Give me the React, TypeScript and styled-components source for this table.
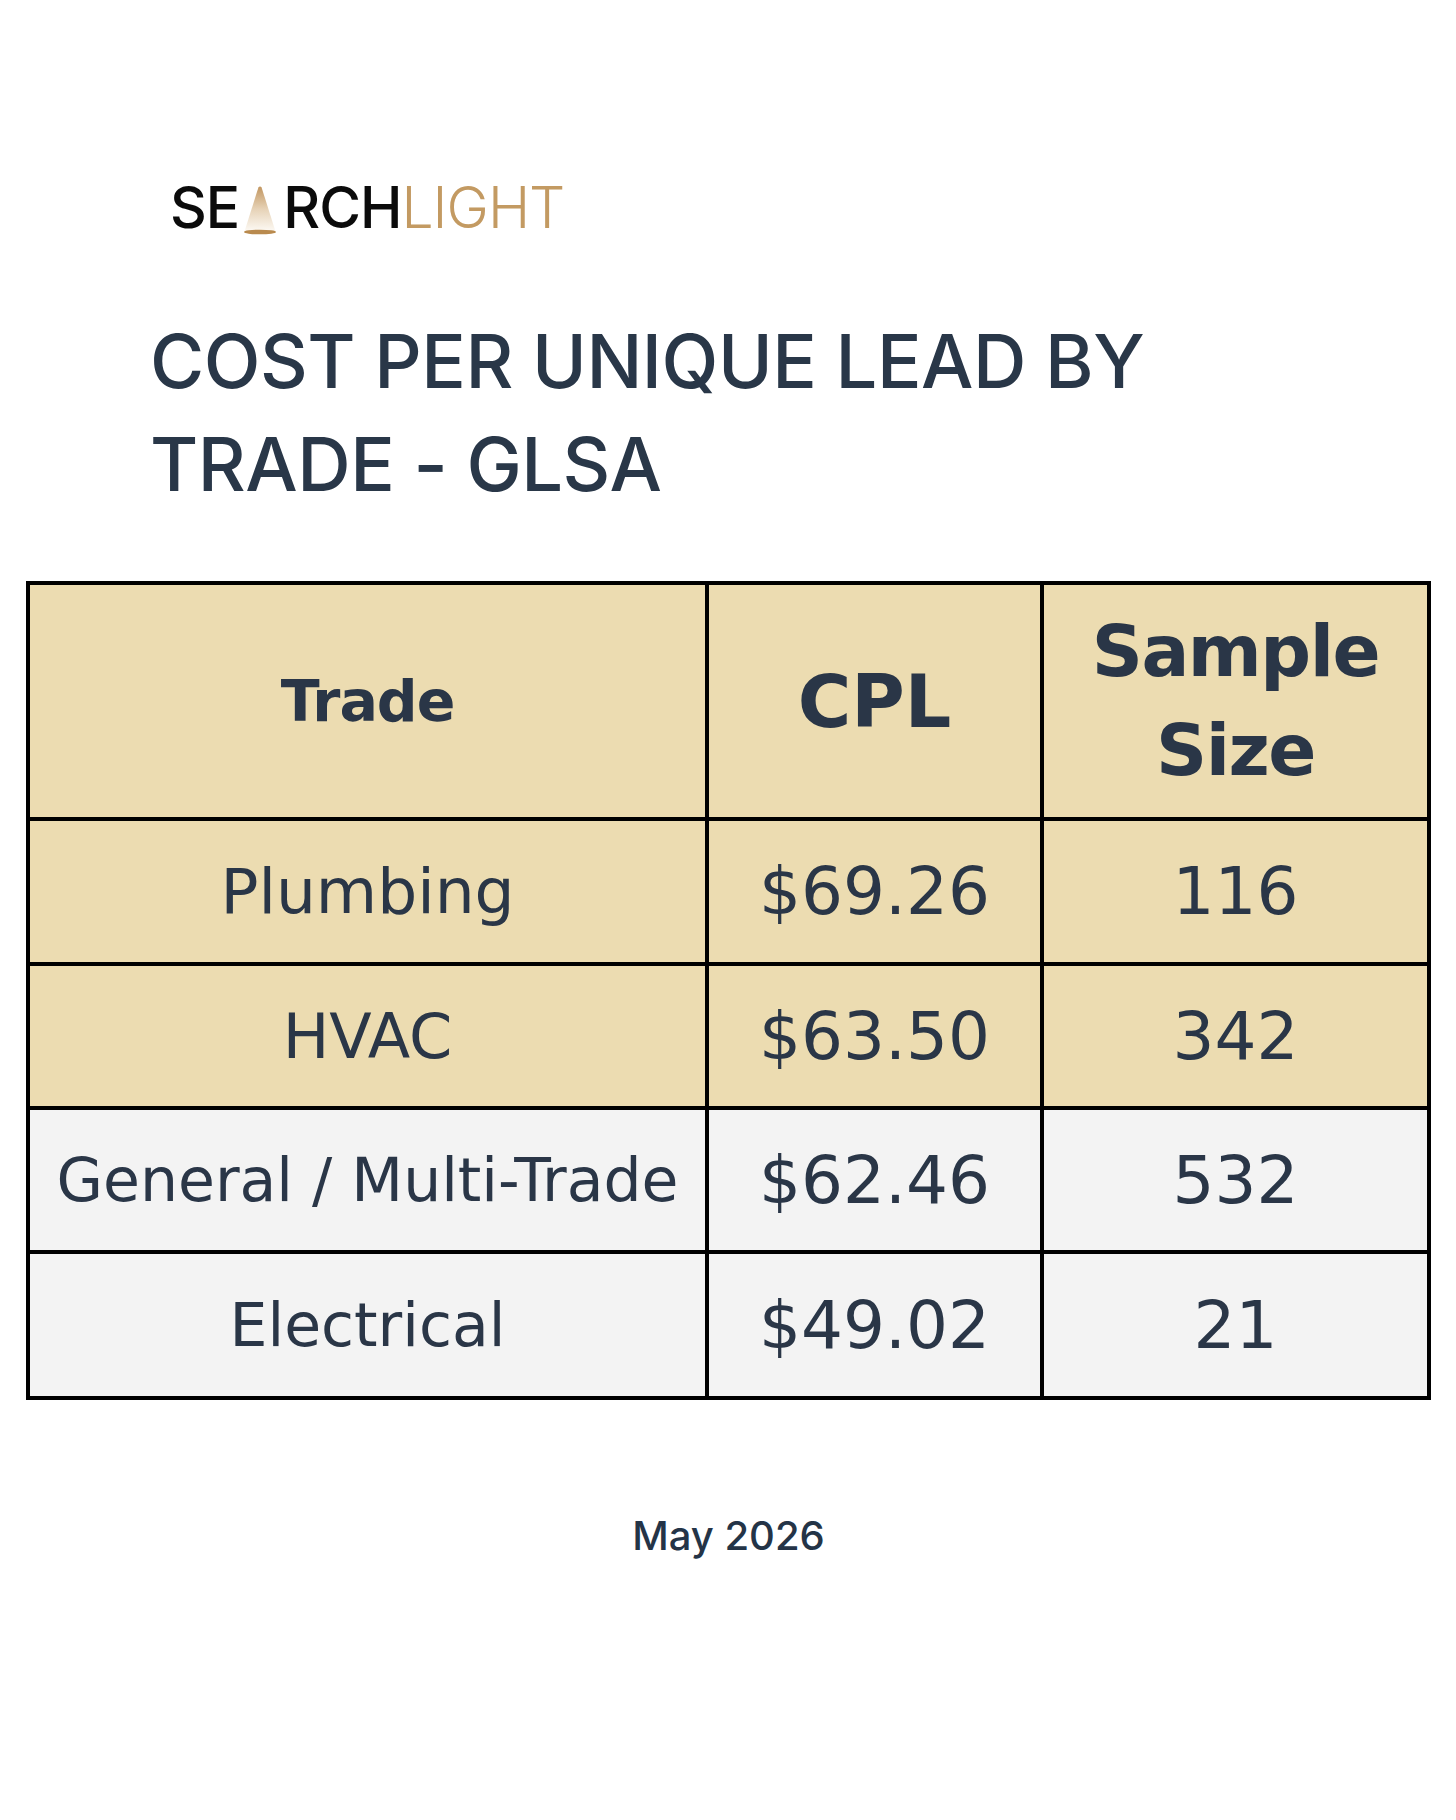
import React from "react";
import styled, { createGlobalStyle } from "styled-components";

const Global = createGlobalStyle`
  html, body { margin: 0; padding: 0; background: #ffffff; }
  body { font-family: Inter, "Liberation Sans", sans-serif; }
`;

const Page = styled.div`
  width: 1456px;
  min-height: 1820px;
  box-sizing: border-box;
  padding: 0 25px 0 26px;
  display: flex;
  flex-direction: column;
`;

const Logo = styled.div`
  margin: 179px 0 0 144px;
  font-family: Inter, "Liberation Sans", sans-serif;
  font-size: 57px;
  line-height: 57px;
  white-space: nowrap;
  display: flex;
  align-items: baseline;
`;

const LogoDark = styled.span`
  color: #0b0b0b;
  font-weight: 500;
  letter-spacing: -1px;
`;

const LogoGold = styled.span`
  color: #c39a62;
  font-weight: 300;
  letter-spacing: -1px;
`;

const Beam = styled.svg`
  width: 34px;
  height: 50px;
  margin: 0 6px 0 4px;
  align-self: flex-end;
  transform: translateY(-1px);
`;

const Title = styled.h1`
  margin: 74px 0 0 124px;
  font-family: Inter, "Liberation Sans", sans-serif;
  font-weight: 500;
  font-size: 74px;
  line-height: 103px;
  color: #293748;
  letter-spacing: -0.5px;
`;

const Grid = styled.div`
  margin-top: 65px;
  display: grid;
  grid-template-columns: 679px 335px 387px;
  grid-template-rows: 236px 145px 144px 144px 146px;
  border-top: 4px solid #000;
  border-left: 4px solid #000;
  width: 1405px;
  box-sizing: border-box;
`;

const Cell = styled.div<{ $bg: string; $size: number; $bold?: boolean; $ls?: number }>`
  box-sizing: border-box;
  border-right: 4px solid #000;
  border-bottom: 4px solid #000;
  background: ${(p) => p.$bg};
  display: flex;
  align-items: center;
  justify-content: center;
  text-align: center;
  font-family: "DejaVu Sans", "Liberation Sans", sans-serif;
  font-weight: ${(p) => (p.$bold ? 700 : 400)};
  font-size: ${(p) => p.$size}px;
  letter-spacing: ${(p) => p.$ls ?? 0}px;
  line-height: 99px;
  color: #2a3647;
  white-space: nowrap;
`;

const DateLine = styled.div`
  margin-top: 112px;
  text-align: center;
  font-family: Inter, "Liberation Sans", sans-serif;
  font-weight: 500;
  font-size: 40px;
  line-height: 48px;
  color: #243447;
`;

const CREAM = "#ecdcb1";
const GRAY = "#f3f3f3";

type Row = { trade: string; tSize: number; cpl: string; n: string; bg: string };

const rows: Row[] = [
  { trade: "Plumbing", tSize: 63, cpl: "$69.26", n: "116", bg: CREAM },
  { trade: "HVAC", tSize: 62, cpl: "$63.50", n: "342", bg: CREAM },
  { trade: "General / Multi-Trade", tSize: 60, cpl: "$62.46", n: "532", bg: GRAY },
  { trade: "Electrical", tSize: 60, cpl: "$49.02", n: "21", bg: GRAY },
];

export default function App() {
  return (
    <>
      <Global />
      <Page>
        <Logo>
          <LogoDark>SE</LogoDark>
          <Beam viewBox="0 0 34 50">
            <defs>
              <linearGradient id="beamFill" x1="0" y1="0" x2="0" y2="1">
                <stop offset="0" stopColor="#c29660" />
                <stop offset="0.5" stopColor="#e6d2b6" />
                <stop offset="1" stopColor="#fdfaf5" />
              </linearGradient>
            </defs>
            <path d="M15.4 2.4 Q17 0.4 18.6 2.4 L32.5 46.5 L1.5 46.5 Z" fill="url(#beamFill)" />
            <ellipse cx="17" cy="47" rx="16" ry="2.3" fill="#b98a4e" />
          </Beam>
          <LogoDark>RCH</LogoDark>
          <LogoGold>LIGHT</LogoGold>
        </Logo>
        <Title>
          COST PER UNIQUE LEAD BY
          <br />
          TRADE - GLSA
        </Title>
        <Grid>
          <Cell $bg={CREAM} $size={57} $bold $ls={-1}>Trade</Cell>
          <Cell $bg={CREAM} $size={73} $bold>CPL</Cell>
          <Cell $bg={CREAM} $size={71} $bold $ls={-1.5}>
            Sample
            <br />
            Size
          </Cell>
          {rows.map((r) => (
            <React.Fragment key={r.trade}>
              <Cell $bg={r.bg} $size={r.tSize}>{r.trade}</Cell>
              <Cell $bg={r.bg} $size={66}>{r.cpl}</Cell>
              <Cell $bg={r.bg} $size={66}>{r.n}</Cell>
            </React.Fragment>
          ))}
        </Grid>
        <DateLine>May 2026</DateLine>
      </Page>
    </>
  );
}
